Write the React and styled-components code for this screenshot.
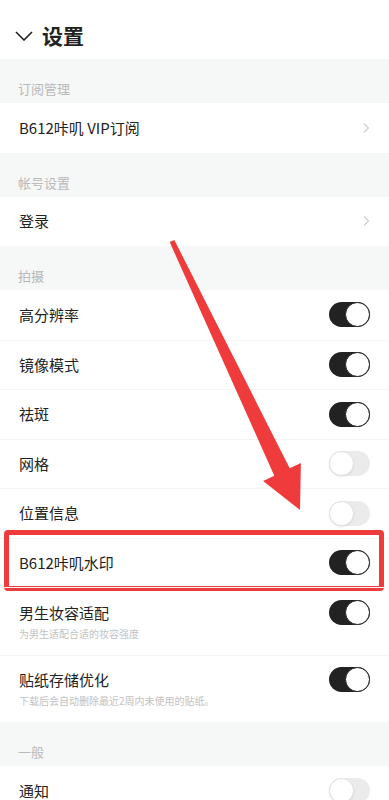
import React from "react";
import styled, { createGlobalStyle } from "styled-components";

const GlobalStyle = createGlobalStyle`
  body {
    margin: 0;
    background: #fff;
    font-family: "Noto Sans CJK SC", "Noto Sans", sans-serif;
    color: #222;
  }
`;

const Page = styled.div`
  position: relative;
  width: 389px;
  height: 800px;
  overflow: hidden;
  background: #fff;
`;

const Header = styled.div`
  display: flex;
  align-items: center;
  gap: 9px;
  height: 59px;
  padding: 0 0 0 15px;
  box-sizing: border-box;
`;

const Title = styled.div`
  font-size: 21px;
  font-weight: 700;
  line-height: 1;
  margin-top: 12px;
`;

const ChevronDown = styled.svg`
  margin-top: 12px;
`;

const SectionLabel = styled.div`
  display: flex;
  align-items: flex-end;
  height: 44px;
  box-sizing: border-box;
  padding: 0 18px 5px;
  background: #f6f7f7;
  font-size: 13px;
  color: #b9b9b9;
`;

const Row = styled.div`
  position: relative;
  display: flex;
  align-items: center;
  justify-content: space-between;
  height: ${(p) => (p.tall ? "67.5px" : "49.5px")};
  box-sizing: border-box;
  padding: 0 19px 0 19px;
  border-top: ${(p) => (p.first ? "none" : "1px solid #f3f3f3")};
`;

const Texts = styled.div`
  display: flex;
  flex-direction: column;
  gap: 4px;
`;

const Label = styled.div`
  font-size: 15px;
  line-height: 20px;
  color: #222;
`;

const Sub = styled.div`
  font-size: 10px;
  line-height: 13px;
  color: #c2c2c2;
`;

const Toggle = styled.div`
  position: relative;
  width: 41px;
  height: 25px;
  border-radius: 13px;
  background: ${(p) => (p.on ? "#222" : "#ebebeb")};
  flex-shrink: 0;
  margin-top: ${(p) => (p.tall ? "-18px" : "0")};
`;

const Knob = styled.div`
  position: absolute;
  top: 0;
  left: ${(p) => (p.on ? "16px" : "0")};
  width: 25px;
  height: 25px;
  box-sizing: border-box;
  border-radius: 50%;
  background: #fff;
  border: ${(p) => (p.on ? "1.5px solid #222" : "1px solid #e2e2e2")};
  box-shadow: ${(p) => (p.on ? "none" : "0 1px 2px rgba(0,0,0,0.08)")};
`;

const Highlight = styled.div`
  position: absolute;
  top: -9px;
  bottom: -4px;
  left: 4px;
  right: 5px;
  border: 5px solid #ef3b3b;
  border-radius: 4px;
  pointer-events: none;
`;

const ArrowLayer = styled.svg`
  position: absolute;
  top: 0;
  left: 0;
  pointer-events: none;
`;

const Switch = ({ on, tall }) => (
  <Toggle on={on} tall={tall}>
    <Knob on={on} />
  </Toggle>
);

const ChevronRight = () => (
  <svg width="8" height="12" viewBox="0 0 8 12">
    <path d="M2 1.5 L6.5 6 L2 10.5" fill="none" stroke="#cfcfcf" strokeWidth="1.2" />
  </svg>
);

const shooting = [
  { label: "高分辨率", on: true },
  { label: "镜像模式", on: true },
  { label: "祛斑", on: true },
  { label: "网格", on: false },
  { label: "位置信息", on: false },
  { label: "B612咔叽水印", on: true, mark: true },
  { label: "男生妆容适配", on: true, sub: "为男生适配合适的妆容强度" },
  { label: "贴纸存储优化", on: true, sub: "下载后会自动删除最近2周内未使用的贴纸。" },
];

export default function App() {
  return (
    <Page>
      <GlobalStyle />
      <Header>
        <ChevronDown width="18" height="10" viewBox="0 0 18 10">
          <path d="M1 1 L9 9 L17 1" fill="none" stroke="#222" strokeWidth="1.6" />
        </ChevronDown>
        <Title>设置</Title>
      </Header>

      <SectionLabel>订阅管理</SectionLabel>
      <Row first>
        <Label>B612咔叽 VIP订阅</Label>
        <ChevronRight />
      </Row>

      <SectionLabel>帐号设置</SectionLabel>
      <Row first>
        <Label>登录</Label>
        <ChevronRight />
      </Row>

      <SectionLabel>拍摄</SectionLabel>
      {shooting.map((item, i) => (
        <Row key={item.label} first={i === 0} tall={!!item.sub}>
          <Texts>
            <Label>{item.label}</Label>
            {item.sub && <Sub>{item.sub}</Sub>}
          </Texts>
          <Switch on={item.on} tall={!!item.sub} />
          {item.mark && <Highlight />}
        </Row>
      ))}

      <SectionLabel>一般</SectionLabel>
      <Row first>
        <Label>通知</Label>
        <Switch on={false} />
      </Row>

      <ArrowLayer width="389" height="800" viewBox="0 0 389 800">
        <polygon
          points="169.7,242.1 174.3,239.9 289.7,468.3 300.9,463 300,510 263.1,481 274.3,475.7"
          fill="#ef3b3b"
          strokeLinejoin="round"
        />
      </ArrowLayer>
    </Page>
  );
}
